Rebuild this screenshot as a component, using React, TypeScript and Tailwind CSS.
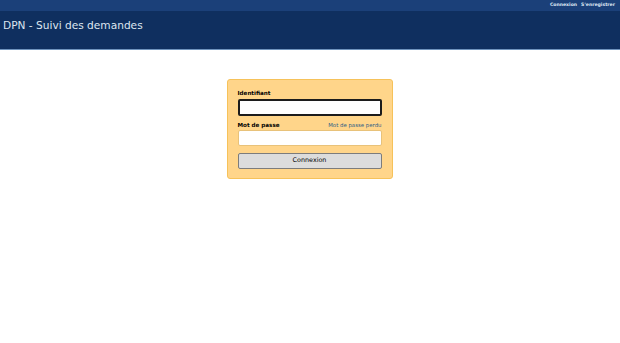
import React, { useState } from "react";

export default function App() {
  const [login, setLogin] = useState("");
  const [password, setPassword] = useState("");

  return (
    <div className="min-h-[343px] w-full bg-white">
      <div className="flex h-[11px] items-center justify-end gap-[4px] bg-[#1b4079] pr-[5px] font-['DejaVu_Sans',sans-serif] text-[4.6px] font-bold text-[#dfe8f4]">
        <a>Connexion</a>
        <a>S'enregistrer</a>
      </div>
      <div className="h-[39px] border-b border-[#6f93bd] bg-[#0f2f5f] pl-[3px] pt-[7px]">
        <h1 className="font-['DejaVu_Sans',sans-serif] text-[10.6px] leading-[14px] text-[#dde6f0]">
          DPN - Suivi des demandes
        </h1>
      </div>
      <div className="flex justify-center pt-[29px]">
        <form
          onSubmit={(e) => e.preventDefault()}
          className="ml-[-1px] w-[166px] rounded-[3px] border border-[#f6c25a] bg-[#ffd58a] px-[10px] pt-[9px] pb-[9px] font-['DejaVu_Sans',sans-serif]"
        >
          <label htmlFor="login" className="block text-[5.6px] font-bold leading-[8px] text-black">
            Identifiant
          </label>
          <input
            id="login"
            value={login}
            onChange={(e) => setLogin(e.target.value)}
            className="mt-[2px] block h-[17px] w-full rounded-[2px] border-2 border-[#1c1c1c] bg-white px-[3px] text-[7px] outline-none"
          />
          <div className="mt-[5px] flex items-end justify-between leading-[8px]">
            <label htmlFor="password" className="text-[5.6px] font-bold text-black">
              Mot de passe
            </label>
            <a className="text-[5.4px] text-[#2e5e86]">Mot de passe perdu</a>
          </div>
          <input
            id="password"
            type="password"
            value={password}
            onChange={(e) => setPassword(e.target.value)}
            className="mt-[1px] block h-[16px] w-full rounded-[2px] border border-[#e8c27a] bg-white px-[3px] text-[7px] outline-none"
          />
          <button
            type="submit"
            className="mt-[7px] block h-[16px] w-full rounded-[2px] border-[1.5px] border-[#7c7c7c] bg-[#dcdcdc] text-[6.4px] text-black"
          >
            Connexion
          </button>
        </form>
      </div>
    </div>
  );
}
